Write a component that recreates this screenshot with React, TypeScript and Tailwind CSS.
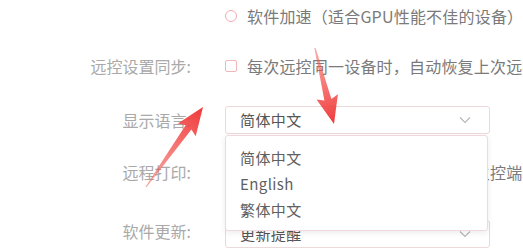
import React from 'react';

// build a tapered arrow polygon from tail to tip
const arrowPoints = (tx: number, ty: number, hx: number, hy: number) => {
  const dx = hx - tx;
  const dy = hy - ty;
  const len = Math.sqrt(dx * dx + dy * dy);
  const ux = dx / len;
  const uy = dy / len;
  const nx = -uy;
  const ny = ux;
  const headLen = 25;
  const headW = 11;
  const shaftW = 3.6;
  const bx = hx - ux * headLen;
  const by = hy - uy * headLen;
  const pts = [
    [tx + nx * 0.6, ty + ny * 0.6],
    [bx + nx * shaftW, by + ny * shaftW],
    [bx - ux * 3 + nx * headW, by - uy * 3 + ny * headW],
    [hx, hy],
    [bx - ux * 3 - nx * headW, by - uy * 3 - ny * headW],
    [bx - nx * shaftW, by - ny * shaftW],
    [tx - nx * 0.6, ty - ny * 0.6],
  ];
  return pts.map((p) => `${p[0].toFixed(1)},${p[1].toFixed(1)}`).join(' ');
};

const Chevron = () => (
  <svg width="12" height="8" viewBox="0 0 12 8" fill="none">
    <path d="M1 1.5 L6 6.5 L11 1.5" stroke="#b8b8b8" strokeWidth="1.2" />
  </svg>
);

const languages = ['简体中文', 'English', '繁体中文'];

const App = () => {
  return (
    <div
      className="relative w-[523px] h-[249px] overflow-hidden bg-white text-[16px]"
      style={{ fontFamily: '"Noto Sans CJK SC", "Noto Sans", sans-serif' }}
    >
      <div className="flex flex-col">
        {/* hardware / software acceleration */}
        <div className="grid grid-cols-[191px_1fr] gap-x-[34px] h-8 items-center">
          <div />
          <div className="flex items-center gap-[10px] whitespace-nowrap text-[#7a7a7a] tracking-[0.2px]">
            <span className="w-[12px] h-[12px] rounded-full border border-[#f2aab2] shrink-0" />
            软件加速（适合GPU性能不佳的设备）
          </div>
        </div>

        {/* remote settings sync */}
        <div className="grid grid-cols-[191px_1fr] gap-x-[34px] h-8 mt-[18px] items-center">
          <div className="text-right text-[#a9a9a9] whitespace-nowrap">远控设置同步:</div>
          <div className="flex items-center gap-[10px] whitespace-nowrap text-[#7a7a7a] tracking-[0.2px]">
            <span className="w-[12px] h-[12px] rounded-[2px] border border-[#f2b6b6] shrink-0" />
            每次远控同一设备时，自动恢复上次远控的设置
          </div>
        </div>

        {/* display language */}
        <div className="grid grid-cols-[191px_1fr] gap-x-[34px] h-[28px] mt-[24px] items-center relative z-10">
          <div className="text-right text-[#a9a9a9] whitespace-nowrap">显示语言:</div>
          <div className="relative w-[265px] text-[15px] tracking-[0.4px]">
            <div className="h-[28px] flex items-center justify-between pl-[14px] pr-[18px] border border-[#ecd9d9] rounded-[3px] bg-white text-[#555]">
              <span>简体中文</span>
              <Chevron />
            </div>
            <div className="absolute left-0 top-full mt-[1px] w-[263px] h-[96px] pt-[9px] bg-white border border-[#f1d8dc] rounded-[3px] shadow-[0_2px_6px_rgba(0,0,0,0.08)]">
              {languages.map((lang) => (
                <div key={lang} className="h-[26px] flex items-center pl-[14px] text-[#606060]">
                  {lang}
                </div>
              ))}
            </div>
          </div>
        </div>

        {/* remote printing */}
        <div className="grid grid-cols-[191px_1fr] gap-x-[34px] h-8 mt-[22px] items-center">
          <div className="text-right text-[#a9a9a9] whitespace-nowrap">远程打印:</div>
          <div className="flex items-center gap-[10px] whitespace-nowrap text-[#7a7a7a] tracking-[0.2px]">
            <span className="w-[12px] h-[12px] rounded-[2px] border border-[#f2b6b6] shrink-0" />
            开启后，可将被控端文件发送至主控端打印机打印
          </div>
        </div>

        {/* software update */}
        <div className="grid grid-cols-[191px_1fr] gap-x-[34px] h-[28px] mt-[32px] items-center">
          <div className="text-right text-[#a9a9a9] whitespace-nowrap -translate-y-[3px]">软件更新:</div>
          <div className="h-[28px] w-[265px] flex items-center justify-between pl-[14px] pr-[18px] border border-[#ecd9d9] rounded-[3px] text-[15px] text-[#555] tracking-[0.4px]">
            <span>更新提醒</span>
            <Chevron />
          </div>
        </div>
      </div>

      {/* red annotation arrows */}
      <svg className="absolute inset-0 pointer-events-none z-20" width="523" height="249">
        <defs>
          <linearGradient id="a1" gradientUnits="userSpaceOnUse" x1="146" y1="187" x2="203" y2="107">
            <stop offset="0" stopColor="#f25a50" stopOpacity="0.5" />
            <stop offset="1" stopColor="#f0383a" />
          </linearGradient>
          <linearGradient id="a2" gradientUnits="userSpaceOnUse" x1="315" y1="48" x2="334" y2="124">
            <stop offset="0" stopColor="#f25a50" stopOpacity="0.5" />
            <stop offset="1" stopColor="#f0383a" />
          </linearGradient>
        </defs>
        <polygon points={arrowPoints(146, 187, 203, 107)} fill="url(#a1)" />
        <polygon points={arrowPoints(315, 48, 334, 124)} fill="url(#a2)" />
      </svg>
    </div>
  );
};

export default App;
